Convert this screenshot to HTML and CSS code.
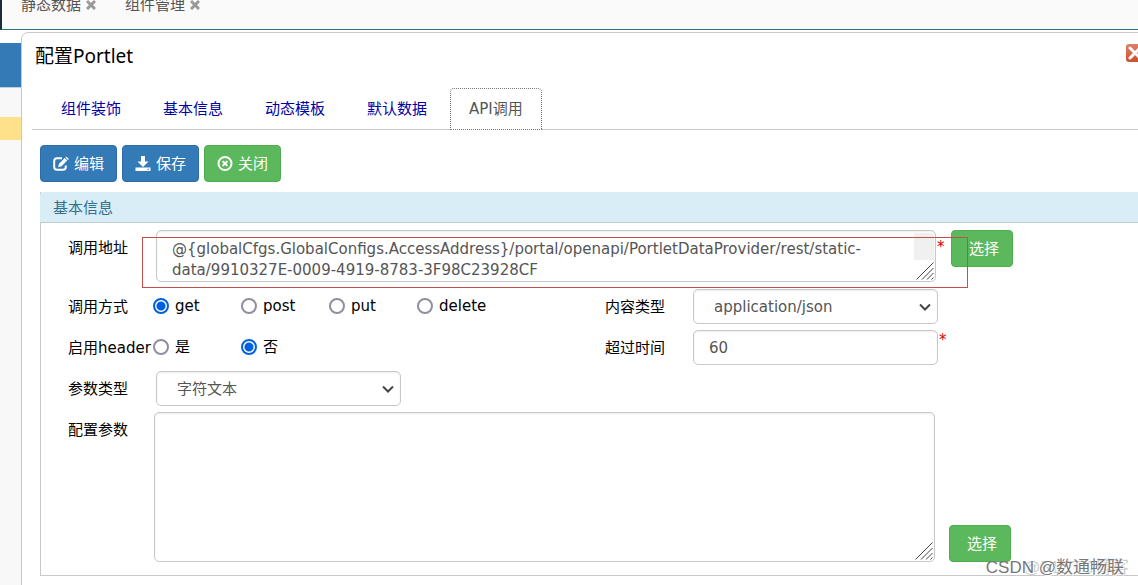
FILE: index.html
```html
<!DOCTYPE html>
<html lang="zh-CN">
<head>
<meta charset="utf-8">
<title>配置Portlet</title>
<link rel="stylesheet" href="styles.css">
</head>
<body>
<div class="shell">
  <nav class="topbar">
    <span class="page-tab">静态数据
      <svg class="page-close" viewBox="0 0 10 10"><path d="M1 1L9 9M9 1L1 9"/></svg></span>
    <span class="page-tab">组件管理
      <svg class="page-close" viewBox="0 0 10 10"><path d="M1 1L9 9M9 1L1 9"/></svg></span>
  </nav>
  <div class="workspace">
    <aside class="sidebar">
      <div class="side-active"></div>
      <div class="side-item"></div>
      <div class="side-mark"></div>
    </aside>
    <main class="dialog">
      <header class="dialog-head">
        <h1 class="dialog-title">配置Portlet</h1>
        <button class="dialog-close" type="button" aria-label="关闭窗口">
          <svg viewBox="0 0 18 18" width="18" height="18"><path d="M4 4L14 14M14 4L4 14"/></svg>
        </button>
      </header>
      <nav class="tabs">
        <a class="tab" href="#">组件装饰</a>
        <a class="tab" href="#">基本信息</a>
        <a class="tab" href="#">动态模板</a>
        <a class="tab" href="#">默认数据</a>
        <a class="tab tab-current" href="#">API调用</a>
      </nav>
      <div class="content">
        <div class="toolbar">
          <button class="btn btn-primary" type="button">
            <svg class="icon" viewBox="0 0 16 16"><path class="line" d="M9 2.200H4Q1.200 2.200 1.200 5V11Q1.200 13.800 4 13.800H10Q12.800 13.800 12.800 11V9.500"/><path d="M5.200 11.200L6 7.800L11.700 2.100L14.200 4.600L8.500 10.300Z"/><path d="M12.400 1.400L13.400.4L15.900 2.900L14.900 3.900Z"/></svg>编辑</button>
          <button class="btn btn-primary" type="button">
            <svg class="icon" viewBox="0 0 16 16"><path d="M6 0H10V5.500H13.500L8 11L2.500 5.500H6Z"/><path d="M.5 11.500H15.500V15H.5ZM12.500 12.700V13.700H14V12.700Z" fill-rule="evenodd"/></svg>保存</button>
          <button class="btn btn-success" type="button">
            <svg class="icon" viewBox="0 0 16 16"><circle class="line" cx="8" cy="7.500" r="6.500"/><path class="line" d="M5.600 5.100L10.400 9.900M10.400 5.100L5.600 9.900"/></svg>关闭</button>
        </div>
        <section class="panel">
          <h2 class="panel-title">基本信息</h2>
          <form class="form">
            <div class="row row-address">
              <label class="label" for="address">调用地址</label>
              <div class="area">
                <textarea class="control address" id="address">@{globalCfgs.GlobalConfigs.AccessAddress}/portal/openapi/PortletDataProvider/rest/static-data/9910327E-0009-4919-8783-3F98C23928CF</textarea>
                <span class="track"></span>
                <svg class="grip" viewBox="0 0 18 18"><path d="M.5 17.500L17.500.5M6 17.500L17.500 6M11 17.500L17.500 11M15.500 17.500L17.500 15.500"/></svg>
              </div>
              <span class="required">*</span>
              <button class="btn btn-success btn-pick" type="button">选择</button>
              <span class="highlight"></span>
            </div>
            <div class="row">
              <span class="label">调用方式</span>
              <div class="radios">
                <label class="radio"><input type="radio" name="method" checked>get</label>
                <label class="radio"><input type="radio" name="method">post</label>
                <label class="radio"><input type="radio" name="method">put</label>
                <label class="radio"><input type="radio" name="method">delete</label>
              </div>
              <label class="label" for="ctype">内容类型</label>
              <div class="choice">
                <select class="control" id="ctype"><option>application/json</option></select>
                <svg class="chevron" viewBox="0 0 12 8"><path d="M1 1.500L6 6.500L11 1.500"/></svg>
              </div>
            </div>
            <div class="row">
              <span class="label">启用header</span>
              <div class="radios">
                <label class="radio"><input type="radio" name="header">是</label>
                <label class="radio"><input type="radio" name="header" checked>否</label>
              </div>
              <label class="label" for="timeout">超过时间</label>
              <div class="choice"><input class="control" id="timeout" type="text" value="60"></div>
              <span class="required">*</span>
            </div>
            <div class="row">
              <label class="label" for="ptype">参数类型</label>
              <div class="choice">
                <select class="control" id="ptype"><option>字符文本</option></select>
                <svg class="chevron" viewBox="0 0 12 8"><path d="M1 1.500L6 6.500L11 1.500"/></svg>
              </div>
            </div>
            <div class="row row-params">
              <label class="label" for="params">配置参数</label>
              <div class="area">
                <textarea class="control params" id="params"></textarea>
                <svg class="grip" viewBox="0 0 18 18"><path d="M.5 17.500L17.500.5M6 17.500L17.500 6M11 17.500L17.500 11M15.500 17.500L17.500 15.500"/></svg>
              </div>
              <button class="btn btn-success btn-pick" type="button">选择</button>
            </div>
          </form>
        </section>
      </div>
    </main>
  </div>
  <div class="mark mark-light">@51CTO博客</div>
  <div class="mark mark-dark">CSDN @数通畅联</div>
</div>
</body>
</html>
```
FILE: styles.css
```css
* { box-sizing: border-box; }

body {
  margin: 0;
  font: 15px/20px "DejaVu Sans", "Noto Sans CJK SC", sans-serif;
  color: #000;
  background: #fff;
}

button, input, select, textarea { font: inherit; margin: 0; }

.shell {
  position: relative;
  display: flex;
  flex-direction: column;
  height: 100vh;
  overflow: hidden;
}

.topbar {
  display: flex;
  flex: none;
  gap: 29px;
  height: 30px;
  padding-left: 19px;
  border-left: 2px solid #1c2b3a;
  border-bottom: 1px solid #2f7180;
  background: #fafafa;
  color: #555;
  line-height: 10px;
}

.page-tab { display: flex; gap: 5px; height: 10px; }
.page-close { width: 10px; height: 10px; fill: none; stroke: #999; stroke-width: 3; }

.workspace { display: flex; flex: 1; min-height: 0; }

.sidebar { flex: none; width: 21px; padding-top: 13px; background: linear-gradient(#fff 13px, #f8f8f8 13px); }
.side-active { height: 45px; background: #337ab7; border-bottom: 1px solid #b9d0e3; }
.side-item { height: 29px; }
.side-mark { height: 23px; background: #ffe18c; }

.dialog {
  flex: 1;
  margin: 2px -20px -10px 0;
  padding-left: 10px;
  border: 1px solid #c8c8c8;
  border-radius: 7px;
  background: #fff;
}

.dialog-head {
  display: flex;
  align-items: center;
  justify-content: space-between;
  height: 46px;
  padding: 0 13px 0 3px;
}
.dialog-title { margin: 0; font: 19px/24px "Noto Sans", "Noto Sans CJK SC", sans-serif; }
.dialog-close {
  display: flex;
  align-self: flex-start;
  margin-top: 11px;
  padding: 0;
  border: 0;
  border-radius: 3px;
  background: linear-gradient(#de8068, #cb4f2f);
}
.dialog-close path { fill: none; stroke: #fff; stroke-width: 3; stroke-linecap: round; }

.tabs { display: flex; gap: 4px; height: 51px; padding: 9px 0 0 10px; border-bottom: 1px solid #c8c8c8; }
.tab {
  height: 42px;
  padding: 0 18px;
  border: 1px solid transparent;
  border-radius: 4px 4px 0 0;
  color: #0000a8;
  line-height: 40px;
  text-decoration: none;
}
.tab-current { border: 1px dotted #777; background: #fff; color: #555; }

.content { padding: 15px 8px 0; }

.toolbar { display: flex; gap: 5px; margin-bottom: 10px; }
.btn {
  display: flex;
  flex: none;
  align-items: center;
  gap: 5px;
  height: 37px;
  padding: 0 12px;
  border: 1px solid;
  border-radius: 4px;
  color: #fff;
  white-space: nowrap;
}
.btn-primary { background: #337ab7; border-color: #2e6da4; }
.btn-success { background: #5cb85c; border-color: #4cae4c; }
.btn-pick { width: 62px; padding: 0 0 0 17px; }
.icon { width: 16px; height: 16px; fill: #fff; }
.icon .line { fill: none; stroke: #fff; stroke-width: 2; }

.panel { border: 1px solid #c8c8c8; border-top: 0; }
.panel-title {
  height: 31px;
  margin: 0 -1px;
  padding-left: 13px;
  border-bottom: 1px solid #bccbd2;
  border-radius: 4px 4px 0 0;
  background: #d9edf7;
  color: #31708f;
  font-size: 15px;
  font-weight: 400;
  line-height: 32px;
}

.form { display: flex; flex-direction: column; gap: 7px; padding: 7px 0 13px 27px; }
.row { position: relative; display: flex; align-items: flex-start; height: 34px; }
.row-address { height: 52px; }
.row-params { height: 150px; }
.label { flex: none; width: 85px; line-height: 36px; white-space: nowrap; }

.control {
  display: block;
  width: 100%;
  height: 35px;
  padding: 0 15px;
  border: 1px solid #c8c8c8;
  border-radius: 5px;
  outline: 0;
  background: #fff;
  box-shadow: inset 0 1px 2px rgba(0, 0, 0, .08);
  color: #555;
}
select.control { padding-left: 20px; appearance: none; }

.area { position: relative; width: 780px; margin-left: 3px; }
.row-params .area { width: 781px; margin-left: 1px; }
textarea.control { resize: none; overflow: hidden; line-height: 21px; }
textarea.address { height: 52px; padding: 8px 40px 0 15px; }
textarea.params { height: 150px; }
.track { position: absolute; top: 3px; right: 2px; width: 20px; height: 27px; background: #f0f0f0; }
.grip { position: absolute; right: 2px; bottom: 2px; width: 18px; height: 18px; fill: none; stroke: #444; stroke-width: 1; }

.choice { position: relative; width: 245px; margin-left: 3px; }
.chevron { position: absolute; top: 14px; right: 7px; width: 12px; height: 8px; fill: none; stroke: #444; stroke-width: 2; }

.required { width: 15px; padding-left: 1px; color: #e00000; }
.row-address .required { padding-top: 7px; }
.row-params .btn-pick { align-self: flex-end; margin-left: 14px; }

.highlight {
  position: absolute;
  top: 7px;
  left: 74px;
  width: 826px;
  height: 51px;
  border: 1px solid #c0504d;
  pointer-events: none;
  z-index: 1;
}

.radios { display: flex; width: 452px; }
.radio { display: flex; align-items: center; gap: 6px; width: 88px; height: 34px; }
.radio input {
  appearance: none;
  width: 16px;
  height: 16px;
  border: 2px solid #8f8f9d;
  border-radius: 50%;
  background: #fff;
}
.radio input:checked { border-color: #0060df; background: radial-gradient(#0060df 4px, #fff 5px); }

.mark { position: absolute; bottom: 5px; font: 17px/24px "Liberation Sans", "Noto Sans CJK SC", sans-serif; white-space: nowrap; }
.mark-dark { right: 14px; color: #777; text-shadow: 1px 1px 0 #fff; }
.mark-light { right: 9px; color: #ccc; }
```
